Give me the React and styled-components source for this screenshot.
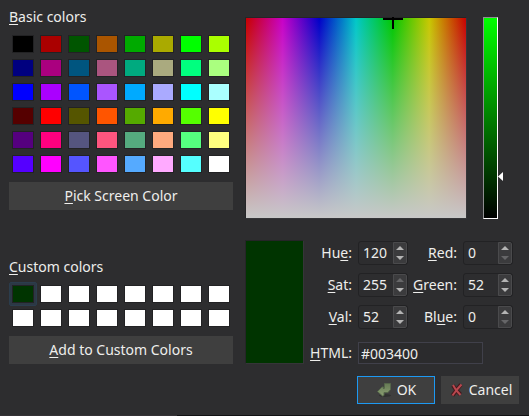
import React, { useState } from "react";
import styled, { createGlobalStyle } from "styled-components";

const GlobalStyle = createGlobalStyle`
  *, *::before, *::after { box-sizing: border-box; }
  body { margin: 0; background: #2d2d2f; }
  body, button, input {
    font-family: "Noto Sans", sans-serif;
    font-size: 14px;
    line-height: 18px;
    color: #eeeeec;
  }
`;

const Dialog = styled.form`
  display: flex;
  flex-direction: column;
  gap: 12px;
  min-height: 100vh;
  padding: 8px 10px 11px 9px;
  background: #2d2d2f;
`;

const Body = styled.div`
  display: grid;
  grid-template-columns: 224px minmax(0, 1fr);
  column-gap: 12px;
  row-gap: 21px;
`;

const Group = styled.section`
  display: flex;
  flex-direction: column;
  align-self: ${(p) => p.$align || "start"};
  gap: 6px;
`;

const Title = styled.h2`
  margin: 0;
  font-size: 14px;
  font-weight: 400;
  line-height: 18px;
`;

const Key = styled.u`
  text-decoration-thickness: 1px;
  text-underline-offset: 2px;
  text-decoration-skip-ink: none;
`;

const Swatches = styled.div`
  display: grid;
  grid-template-columns: repeat(8, 1fr);
`;

const Cell = styled.button`
  height: 24px;
  padding: 2px;
  border: 1px solid ${(p) => (p.$selected ? "#2b3d4d" : "transparent")};
  border-radius: 2px;
  background: ${(p) => (p.$selected ? "#2c3844" : "transparent")};
`;

const Chip = styled.span`
  display: block;
  height: 18px;
  border: 1px solid #222224;
  background: ${(p) => p.$color};
`;

const Button = styled.button`
  display: flex;
  align-items: center;
  justify-content: center;
  gap: 5px;
  height: 28px;
  padding: 0;
  border: 1px solid ${(p) => (p.$primary ? "#1d99f3" : "#3f3f3f")};
  background: #3f3f3f;
  min-width: 78px;
`;

const Picker = styled.div`
  display: flex;
  gap: 16px;
  padding: 9px 16px 0 0;
`;

const Field = styled.div`
  position: relative;
  flex: 1;
  height: 202px;
  border: 1px solid #252527;
  border-right-color: #353538;
  border-bottom-color: #353538;
  background:
    linear-gradient(to bottom, rgba(200, 200, 200, 0), rgb(200, 200, 200)),
    linear-gradient(to right, #c80000, #c800c8, #0000c8, #00c8c8, #00c800, #c8c800, #c80000);
`;

const Cross = styled.svg`
  position: absolute;
  top: -1px;
  left: calc(66.67% - 10px);
  width: 20px;
  height: 12px;
`;

const ValueTrack = styled.div`
  display: flex;
  position: relative;
  width: 20px;
`;

const ValueBar = styled.div`
  width: 15px;
  border: 1px solid #fff;
  border-top-color: #8f8f91;
  border-left-color: #8f8f91;
  background: linear-gradient(to bottom, #00ff00, #000);
`;

const Pointer = styled.svg`
  position: absolute;
  right: 0;
  top: 155px;
  width: 5px;
  height: 9px;
`;

const Details = styled.div`
  display: grid;
  grid-template-columns: 59px minmax(0, 1fr);
  gap: 6px;
  padding-right: 6px;
`;

const Preview = styled.div`
  border: 1px solid #252527;
  border-right-color: #353538;
  border-bottom-color: #353538;
  background: #003400;
`;

const Values = styled.div`
  display: grid;
  grid-template-columns: 42px 50px minmax(0, 1fr) 50px;
  gap: 8px 6px;
  align-items: center;
  padding-top: 1px;
`;

const Label = styled.label`
  justify-self: end;
  white-space: nowrap;
`;

const SpinFrame = styled.span`
  display: grid;
  grid-template-columns: 1fr 14px;
  height: 24px;
  border: 1px solid #222224;
  border-radius: 3px;
  overflow: hidden;
  background: #2d2d2f;
`;

const SpinInput = styled.input`
  min-width: 0;
  width: 100%;
  padding: 0 0 0 4px;
  border: 0;
  outline: 0;
  background: transparent;
`;

const Steps = styled.span`
  display: grid;
  grid-template-rows: 1fr 1fr;
  border: 1px solid #4a4a4c;
  border-radius: 0 2px 2px 0;
  background: #3b3b3d;
`;

const Step = styled.button`
  display: flex;
  align-items: center;
  justify-content: center;
  padding: 0;
  border: 0;
  background: transparent;
  color: #b4b4b4;
  &:disabled { color: #666668; }
`;

const HtmlRow = styled.div`
  grid-column: 1 / -1;
  display: grid;
  grid-template-columns: 42px minmax(0, 1fr);
  gap: 6px;
  align-items: center;
  margin-top: 5px;
  padding-right: 30px;
`;

const HtmlInput = styled.input`
  width: 100%;
  height: 22px;
  padding: 0 2px;
  border: 1px solid #40404a;
  outline: 0;
  background: #2b2b2d;
`;

const Footer = styled.footer`
  display: flex;
  justify-content: flex-end;
  gap: 6px;
`;

const Edge = styled.div`
  position: fixed;
  right: 0;
  bottom: 0;
  left: 0;
  height: 1px;
  background: linear-gradient(to right, #353236 33.5%, #121214 33.5%);
`;

const basic = [
  "#000000", "#aa0000", "#005500", "#aa5500", "#00aa00", "#aaaa00", "#00ff00", "#aaff00",
  "#00007f", "#aa007f", "#00557f", "#aa557f", "#00aa7f", "#aaaa7f", "#00ff7f", "#aaff7f",
  "#0000ff", "#aa00ff", "#0055ff", "#aa55ff", "#00aaff", "#aaaaff", "#00ffff", "#aaffff",
  "#550000", "#ff0000", "#555500", "#ff5500", "#55aa00", "#ffaa00", "#55ff00", "#ffff00",
  "#55007f", "#ff007f", "#55557f", "#ff557f", "#55aa7f", "#ffaa7f", "#55ff7f", "#ffff7f",
  "#5500ff", "#ff00ff", "#5555ff", "#ff55ff", "#55aaff", "#ffaaff", "#55ffff", "#ffffff",
];
const custom = ["#003400", ...Array(15).fill("#ffffff")];

function Palette({ colors, selected, name }) {
  return (
    <Swatches role="group" aria-label={name}>
      {colors.map((c, i) => (
        <Cell key={i} type="button" aria-label={c} $selected={i === selected}>
          <Chip $color={c} />
        </Cell>
      ))}
    </Swatches>
  );
}

function Spin({ id, children, initial, max }) {
  const [value, setValue] = useState(initial);
  return (
    <>
      <Label htmlFor={id}>{children}</Label>
      <SpinFrame>
        <SpinInput
          id={id}
          inputMode="numeric"
          value={value}
          onChange={(e) => setValue(Math.min(max, Number(e.target.value) || 0))}
        />
        <Steps>
          <Step type="button" aria-label="Increase" disabled={value >= max} onClick={() => setValue(value + 1)}>
            <svg width="8" height="4" viewBox="0 0 8 4"><path d="M0 4 4 0 8 4Z" fill="currentColor" /></svg>
          </Step>
          <Step type="button" aria-label="Decrease" disabled={value <= 0} onClick={() => setValue(value - 1)}>
            <svg width="8" height="4" viewBox="0 0 8 4"><path d="M0 0H8L4 4Z" fill="currentColor" /></svg>
          </Step>
        </Steps>
      </SpinFrame>
    </>
  );
}

function OkIcon() {
  return (
    <svg width="16" height="16" viewBox="0 0 16 16" aria-hidden="true">
      <defs>
        <linearGradient id="okFill" x1="0" y1="0" x2="0" y2="1">
          <stop offset="0" stopColor="#667a55" />
          <stop offset="1" stopColor="#8b9f72" />
        </linearGradient>
      </defs>
      <ellipse cx="9" cy="13.5" rx="6" ry="1.5" fill="#303130" />
      <path d="M8.5 1.5H14.5V7.5L12 10.5H8V13.5L6.5 14 1.5 9.5 6 5H7.5V7L8.5 6Z" fill="url(#okFill)" stroke="#55664a" strokeLinejoin="round" />
    </svg>
  );
}

function CancelIcon() {
  return (
    <svg width="16" height="16" viewBox="0 0 16 16" aria-hidden="true">
      <path d="M5 3.5 8 8 12.5 12.5M13 2.5 9 7.5 4.5 13.5" fill="none" stroke="#45181c" strokeWidth="4" strokeLinejoin="round" />
      <path d="M5 3 8 8 12.5 13M13.5 2.5 9 7.5 4.5 13.5" fill="none" stroke="#b8484f" strokeWidth="2" strokeLinejoin="round" />
    </svg>
  );
}

export default function App() {
  const [html, setHtml] = useState("#003400");
  return (
    <>
      <GlobalStyle />
      <Dialog onSubmit={(e) => e.preventDefault()}>
        <Body>
          <Group>
            <Title><Key>B</Key>asic colors</Title>
            <Palette colors={basic} name="Basic colors" />
            <Button type="button"><span><Key>P</Key>ick Screen Color</span></Button>
          </Group>
          <Picker>
            <Field>
              <Cross viewBox="0 0 20 12" aria-hidden="true">
                <path d="M0 1H20V3H11V12H9V3H0ZM9 0H11V1H9Z" fill="#000" />
              </Cross>
            </Field>
            <ValueTrack>
              <ValueBar />
              <Pointer viewBox="0 0 5 9" aria-hidden="true"><path d="M5 0V9L0 4.5Z" fill="#fff" /></Pointer>
            </ValueTrack>
          </Picker>
          <Group $align="end">
            <Title><Key>C</Key>ustom colors</Title>
            <Palette colors={custom} selected={0} name="Custom colors" />
            <Button type="button"><span><Key>A</Key>dd to Custom Colors</span></Button>
          </Group>
          <Details>
            <Preview />
            <Values>
              <Spin id="hue" initial={120} max={359}>Hu<Key>e</Key>:</Spin>
              <Spin id="red" initial={0} max={255}><Key>R</Key>ed:</Spin>
              <Spin id="sat" initial={255} max={255}><Key>S</Key>at:</Spin>
              <Spin id="green" initial={52} max={255}><Key>G</Key>reen:</Spin>
              <Spin id="val" initial={52} max={255}><Key>V</Key>al:</Spin>
              <Spin id="blue" initial={0} max={255}>Bl<Key>u</Key>e:</Spin>
              <HtmlRow>
                <Label htmlFor="html"><Key>H</Key>TML:</Label>
                <HtmlInput id="html" value={html} onChange={(e) => setHtml(e.target.value)} />
              </HtmlRow>
            </Values>
          </Details>
        </Body>
        <Footer>
          <Button type="submit" $primary><OkIcon />OK</Button>
          <Button type="button"><CancelIcon />Cancel</Button>
        </Footer>
      </Dialog>
      <Edge />
    </>
  );
}
